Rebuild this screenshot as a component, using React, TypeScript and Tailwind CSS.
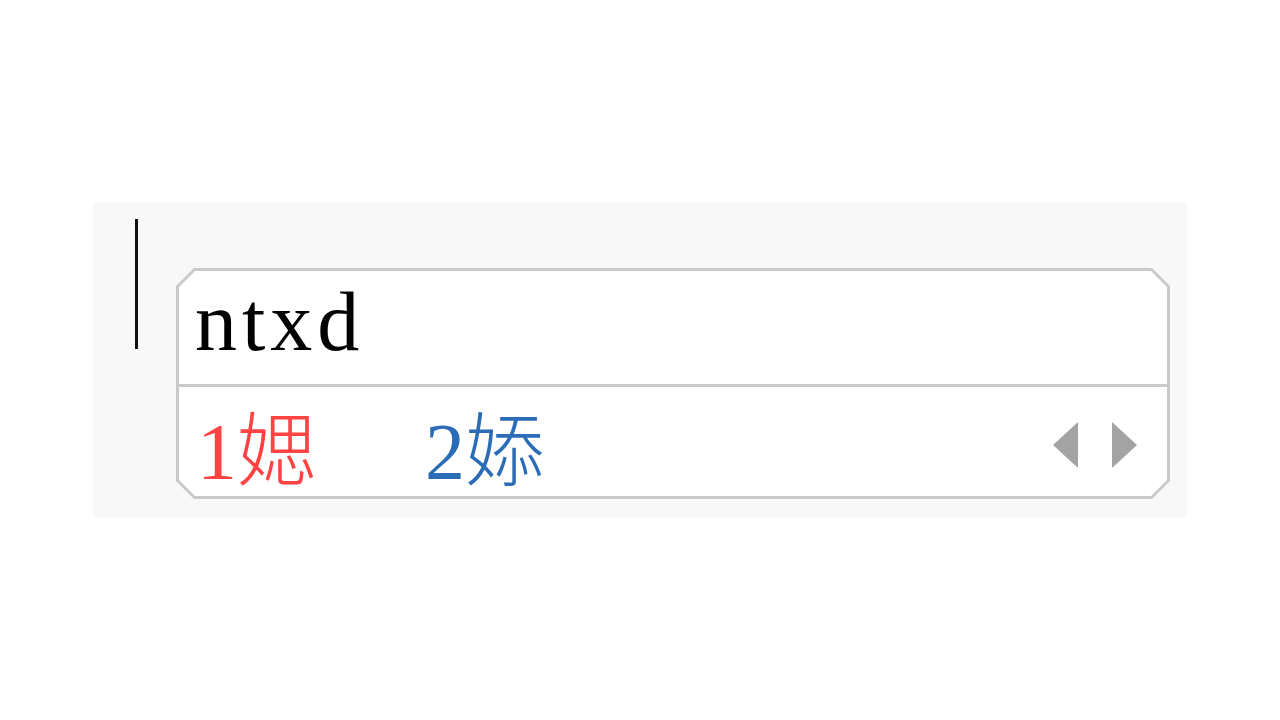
const chamfer =
  "[clip-path:polygon(18px_0,calc(100%-18px)_0,100%_18px,100%_calc(100%-18px),calc(100%-18px)_100%,18px_100%,0_calc(100%-18px),0_18px)]";

const innerChamfer =
  "[clip-path:polygon(16px_0,calc(100%-16px)_0,100%_16px,100%_calc(100%-16px),calc(100%-16px)_100%,16px_100%,0_calc(100%-16px),0_16px)]";

const Arrow = ({ dir }: { dir: "left" | "right" }) => (
  <svg width="26" height="46" viewBox="0 0 26 46">
    {dir === "left" ? (
      <polygon points="25,0 25,46 0,23" fill="#a3a3a3" />
    ) : (
      <polygon points="1,0 1,46 26,23" fill="#a3a3a3" />
    )}
  </svg>
);

export default function App() {
  return (
    <div className="h-[720px] w-[1280px] bg-white pl-[93px] pt-[202px]">
      <div className="flex h-[315px] w-[1094px] items-start bg-[#f8f8f8] pl-[42px]">
        <div className="mt-[17px] h-[130px] w-[3px] bg-[#111]" />

        <div className={`ml-[38px] mt-[66px] w-[994px] bg-[#c9c9c9] p-[3px] ${chamfer}`}>
          <div className={`bg-white ${innerChamfer}`}>
            <div
              className="flex h-[113px] items-center pb-[12px] pl-[16px] text-[84px] leading-none tracking-[5px] text-black"
              style={{ fontFamily: '"Liberation Serif", serif' }}
            >
              ntxd
            </div>
            <div className="h-[3px] bg-[#c9c9c9]" />
            <div className="flex h-[109px] items-center pl-[18px] pr-[30px]">
              <div
                className="flex items-center gap-[108px] pt-[12px] text-[80px] leading-none"
                style={{ fontFamily: '"Liberation Serif", "Noto Sans CJK SC", serif' }}
              >
                <span className="text-[#ff4343]">
                  1<span className="font-light" style={{ fontFamily: '"Noto Sans CJK SC", sans-serif' }}>媤</span>
                </span>
                <span className="text-[#2a6cb5]">
                  2<span className="font-light" style={{ fontFamily: '"Noto Sans CJK SC", sans-serif' }}>婖</span>
                </span>
              </div>
              <div className="ml-auto flex items-center gap-[32px] pt-[6px]">
                <Arrow dir="left" />
                <Arrow dir="right" />
              </div>
            </div>
          </div>
        </div>
      </div>
    </div>
  );
}
